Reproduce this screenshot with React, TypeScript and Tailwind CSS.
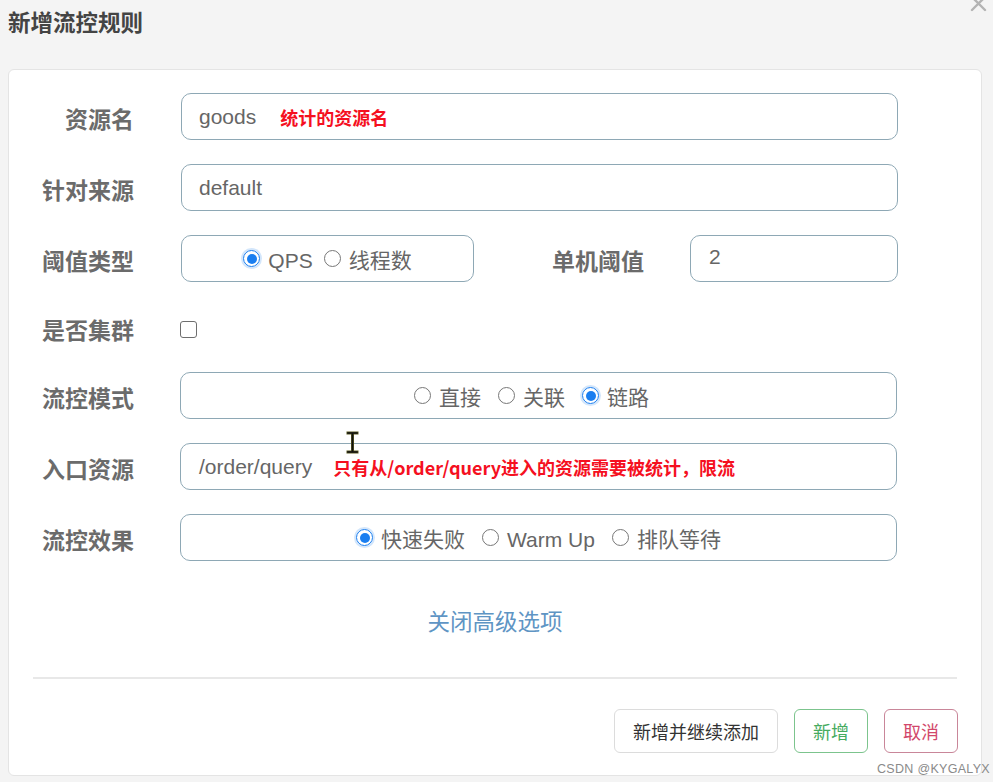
import React from "react";

const FONT = { fontFamily: '"Liberation Sans", "Noto Sans CJK SC", sans-serif' };
const CJK = { fontFamily: '"Noto Sans CJK SC", "Liberation Sans", sans-serif' };

const labelCls =
  "w-[125px] shrink-0 text-right text-[23px] font-bold text-[#6b6b6b] leading-[30px] pt-[3px]";
const boxCls =
  "h-[47px] rounded-[10px] border-[1.5px] border-[#8ea8b5] bg-white flex items-center";

function Radio({ checked, label }: { checked?: boolean; label: string }) {
  return (
    <div className="flex items-center shrink-0">
      {checked ? (
        <span className="shrink-0 w-[17px] h-[17px] rounded-full border-[1.5px] border-[#1a7ef0] ring-2 ring-[#d3e6fb] flex items-center justify-center">
          <span className="w-[10px] h-[10px] rounded-full bg-[#1a7ef0]" />
        </span>
      ) : (
        <span className="shrink-0 w-[17px] h-[17px] rounded-full border-[1.4px] border-[#777] bg-white" />
      )}
      <span className="ml-[8px] text-[21px] text-[#666] leading-[28px] pt-[5px]" style={FONT}>
        {label}
      </span>
    </div>
  );
}

function Label({ children }: { children: React.ReactNode }) {
  return (
    <div className={labelCls} style={CJK}>
      {children}
    </div>
  );
}

export default function App() {
  return (
    <div className="relative w-[993px] h-[782px] bg-[#f4f4f4] overflow-hidden" style={CJK}>
      {/* close */}
      <svg className="absolute right-[6px] top-[-5px]" width="17" height="17" viewBox="0 0 17 17">
        <path d="M2 2L15 15M15 2L2 15" stroke="#b3b3b3" strokeWidth="2.4" strokeLinecap="round" />
      </svg>

      <div className="h-[69px] pl-[8px] pt-[6px]">
        <div className="text-[22.5px] font-bold text-[#444] leading-[30px]">新增流控规则</div>
      </div>

      <div className="ml-[8px] w-[974px] bg-white rounded-[6px] border border-[#e4e4e4] pt-[23px] pb-[22px]">
        <div className="flex flex-col gap-[24px]">
          <div className="flex items-center gap-[47px]">
            <Label>资源名</Label>
            <div className={`${boxCls} w-[717px] pl-[17px]`}>
              <span className="text-[21px] text-[#666]" style={FONT}>
                goods
              </span>
              <span className="ml-[24px] text-[18px] font-bold text-[#f5101f] pt-[2px]" style={CJK}>
                统计的资源名
              </span>
            </div>
          </div>

          <div className="flex items-center gap-[47px]">
            <Label>针对来源</Label>
            <div className={`${boxCls} w-[717px] pl-[17px]`}>
              <span className="text-[21px] text-[#666]" style={FONT}>
                default
              </span>
            </div>
          </div>

          <div className="flex items-center gap-[47px]">
            <Label>阈值类型</Label>
            <div className="flex items-center">
              <div className={`${boxCls} w-[293px] justify-center gap-[11px]`}>
                <Radio checked label="QPS" />
                <Radio label="线程数" />
              </div>
              <div className="w-[170px] text-right text-[23px] font-bold text-[#6b6b6b] leading-[30px] pt-[3px]">
                单机阈值
              </div>
              <div className={`${boxCls} ml-[46px] w-[208px] pl-[18px]`}>
                <span className="text-[21px] text-[#666] -mt-[3px]" style={FONT}>
                  2
                </span>
              </div>
            </div>
          </div>

          <div className="flex items-center gap-[46px] h-[42px]">
            <Label>是否集群</Label>
            <span className="shrink-0 w-[17px] h-[17px] rounded-[3px] border-[1.5px] border-[#6e6e6e] bg-white mt-[5px]" />
          </div>

          <div className="flex items-center gap-[46px]">
            <Label>流控模式</Label>
            <div className={`${boxCls} w-[717px] justify-center gap-[17px] pr-[14px]`}>
              <Radio label="直接" />
              <Radio label="关联" />
              <Radio checked label="链路" />
            </div>
          </div>

          <div className="flex items-center gap-[46px]">
            <Label>入口资源</Label>
            <div className={`${boxCls} w-[717px] pl-[18px]`}>
              <span className="text-[21px] text-[#666]" style={FONT}>
                /order/query
              </span>
              <span className="ml-[21px] text-[18px] font-bold text-[#f5101f] pt-[2px]" style={CJK}>
                只有从/order/query进入的资源需要被统计，限流
              </span>
            </div>
          </div>

          <div className="flex items-center gap-[46px]">
            <Label>流控效果</Label>
            <div className={`${boxCls} w-[717px] justify-center gap-[17px]`}>
              <Radio checked label="快速失败" />
              <Radio label="Warm Up" />
              <Radio label="排队等待" />
            </div>
          </div>
        </div>

        <div className="mt-[44px] text-center text-[22.5px] text-[#5f95c4] leading-[30px]">关闭高级选项</div>

        <div className="mt-[42px] mx-[24px] h-[2px] bg-[#e8e8e8]" />

        <div className="mt-[30px] flex justify-end gap-[16px] pr-[23px]">
          <div className="w-[164px] h-[44px] rounded-[6px] border border-[#dcdcdc] flex items-center justify-center text-[18px] text-[#333]">
            新增并继续添加
          </div>
          <div className="w-[74px] h-[44px] rounded-[6px] border-[1.5px] border-[#7cc48d] flex items-center justify-center text-[18px] text-[#46ab5f]">
            新增
          </div>
          <div className="w-[74px] h-[44px] rounded-[6px] border-[1.5px] border-[#c98699] flex items-center justify-center text-[18px] text-[#d2486b]">
            取消
          </div>
        </div>
      </div>

      {/* text cursor */}
      <svg className="absolute left-[346px] top-[431px]" width="13" height="23" viewBox="0 0 13 23">
        <path d="M2 2H11M2 21H11M6.5 2V21" stroke="#5a5a20" strokeWidth="3" strokeLinecap="square" />
        <path d="M2 2H11M2 21H11M6.5 2V21" stroke="#111" strokeWidth="1.6" strokeLinecap="square" />
      </svg>

      <div
        className="absolute left-[877px] top-[760px] text-[12.5px] text-[#8a8a8a] tracking-[0.3px]"
        style={FONT}
      >
        CSDN @KYGALYX
      </div>
    </div>
  );
}
